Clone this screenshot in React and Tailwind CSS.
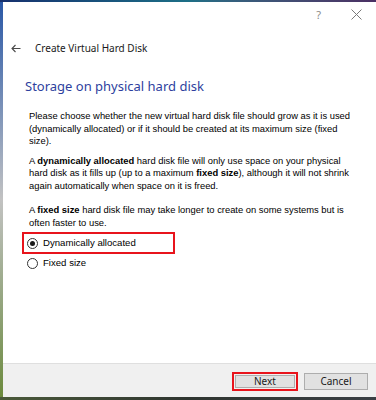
import React from 'react'

// Wizard page: "Create Virtual Hard Disk" – storage type choice
function RadioDot({ checked }) {
  return (
    <span className="w-[11px] h-[11px] rounded-full border border-[#333333] bg-white flex items-center justify-center flex-shrink-0">
      {checked && <span className="w-[5px] h-[5px] rounded-full bg-[#1a1a1a]" />}
    </span>
  )
}

const body = { fontFamily: '"Liberation Sans", Arial, sans-serif' }

export default function App() {
  return (
    <div className="w-[376px] h-[400px] flex flex-col overflow-hidden bg-[#3a443a]">
      {/* desktop strip above the window */}
      <div className="h-[2px] bg-linear-to-r from-[#16306e] via-[#1d6f86] to-[#4a2f63]" />

      <div className="flex flex-1 min-h-0">
        {/* left window edge / desktop */}
        <div className="w-[3px] bg-linear-to-b from-[#2a58a6] via-[#c2c2c2] to-[#6c8a3c]" />

        <div className="flex-1 bg-white flex flex-col" style={{ fontFamily: '"Noto Sans", "Open Sans", sans-serif' }}>
          {/* title bar */}
          <div className="h-[24px] flex items-center justify-end pr-[14px] gap-[30px]">
            <span className="text-[11px] text-[#8a8a8a] leading-none">?</span>
            <svg width="11" height="11" viewBox="0 0 11 11" className="text-[#7a7a7a]">
              <path d="M0.5 0.5 L10.5 10.5 M10.5 0.5 L0.5 10.5" stroke="currentColor" strokeWidth="1" fill="none" />
            </svg>
          </div>

          {/* back + wizard title */}
          <div className="h-[44px] flex items-center pl-[8px]">
            <svg width="10" height="9" viewBox="0 0 10 9" className="text-[#4a4a4a]">
              <path d="M9.5 4.5 H1 M4.5 1 L1 4.5 L4.5 8" stroke="currentColor" strokeWidth="1.1" fill="none" />
            </svg>
            <span className="ml-[14px] text-[10px] text-[#1a1a1a] leading-none">Create Virtual Hard Disk</span>
          </div>

          {/* page body */}
          <div className="flex-1 flex flex-col">
            <h1 className="mt-[7px] pl-[22px] text-[13px] leading-[18px] text-[#2e3f9e] font-normal">
              Storage on physical hard disk
            </h1>

            <div className="pl-[26px] pr-[8px] text-[9.4px] leading-[12.5px] text-black" style={body}>
              <p className="mt-[15px]">
                Please choose whether the new virtual hard disk file should grow as it is used<br />
                (dynamically allocated) or if it should be created at its maximum size (fixed<br />
                size).
              </p>
              <p className="mt-[7px]">
                A <b>dynamically allocated</b> hard disk file will only use space on your physical<br />
                hard disk as it fills up (up to a maximum <b>fixed size</b>), although it will not shrink<br />
                again automatically when space on it is freed.
              </p>
              <p className="mt-[12px]">
                A <b>fixed size</b> hard disk file may take longer to create on some systems but is<br />
                often faster to use.
              </p>
            </div>

            <div className="ml-[19px] mt-[3px] w-[153px] h-[22px] border-2 border-[#e8141c] flex items-center pl-[3px] gap-[5px]">
              <RadioDot checked />
              <span className="text-[9.6px] text-black" style={body}>Dynamically allocated</span>
            </div>
            <div className="ml-[19px] h-[18px] flex items-center pl-[5px] gap-[5px]">
              <RadioDot checked={false} />
              <span className="text-[9.6px] text-black" style={body}>Fixed size</span>
            </div>
          </div>

          {/* button bar */}
          <div className="h-[34px] bg-[#f0f0f0] border-t border-[#dfdfdf] flex items-center justify-end pr-[8px] pt-[1px] gap-[6px]">
            <div className="w-[66px] h-[19px] border-2 border-[#e8141c] p-[1px] flex">
              <button className="flex-1 bg-[#e1e1e1] border border-[#adadad] text-[10px] text-[#1a1a1a] leading-none">Next</button>
            </div>
            <button className="w-[64px] h-[17px] bg-[#e1e1e1] border border-[#adadad] text-[10px] text-[#1a1a1a] leading-none">Cancel</button>
          </div>
        </div>
      </div>

      <div className="h-[3px] bg-linear-to-r from-[#4b5a3a] via-[#2f3530] to-[#3a3f44]" />
    </div>
  )
}
